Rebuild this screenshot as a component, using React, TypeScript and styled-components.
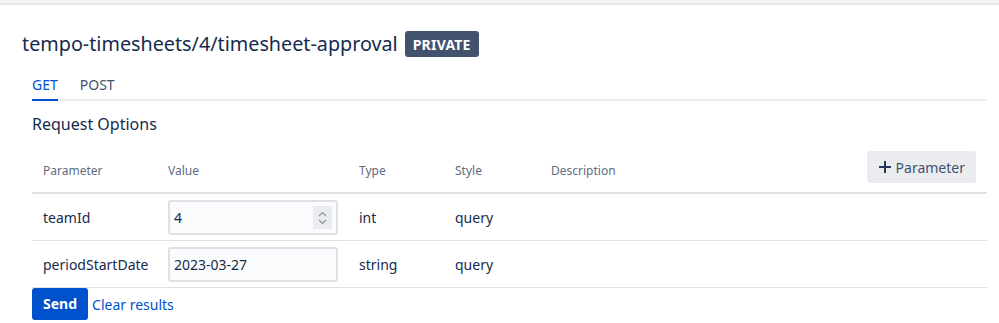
import React from "react";
import styled, { createGlobalStyle } from "styled-components";

const Global = createGlobalStyle`
  html, body { margin: 0; padding: 0; background: #fff; }
  body { font-family: "Segoe UI", "Noto Sans", sans-serif; color: #172b4d; }
  * { box-sizing: border-box; }
`;

const TopBand = styled.div`
  height: 5px;
  background: #f4f5f7;
  border-bottom: 2px solid #e4e5ea;
`;

const Page = styled.div`
  padding: 0 12px 0 22px;
`;

const TitleRow = styled.div`
  display: flex;
  align-items: center;
  gap: 7px;
  margin-top: 26px;
  height: 26px;
`;

const Title = styled.h1`
  margin: 0;
  font-size: 19.75px;
  font-weight: 400;
  line-height: 26px;
  color: #172b4d;
`;

const Badge = styled.span`
  display: inline-flex;
  align-items: center;
  height: 26px;
  padding: 0 8px;
  background: #42526e;
  color: #fff;
  font-weight: 700;
  font-size: 14px;
  border-radius: 3px;
  letter-spacing: 0.2px;
`;

const Section = styled.div`
  margin-left: 10px;
`;

const Tabs = styled.div`
  display: flex;
  gap: 22px;
  margin-top: 18px;
  border-bottom: 2px solid #ebecf0;
`;

const Tab = styled.div<{ $active?: boolean }>`
  font-size: 14px;
  line-height: 20px;
  padding-bottom: 4px;
  margin-bottom: -2px;
  color: ${(p) => (p.$active ? "#0052cc" : "#42526e")};
  border-bottom: 2px solid ${(p) => (p.$active ? "#0052cc" : "transparent")};
`;

const SubTitle = styled.h2`
  margin: 12px 0 0;
  font-size: 16px;
  font-weight: 400;
  line-height: 22px;
  color: #172b4d;
`;

const Table = styled.table`
  width: 100%;
  border-collapse: collapse;
  margin-top: 15px;
  table-layout: fixed;
`;

const Th = styled.th<{ $w?: number; $right?: boolean }>`
  width: ${(p) => (p.$w ? `${p.$w}px` : "auto")};
  text-align: ${(p) => (p.$right ? "right" : "left")};
  font-size: 12px;
  font-weight: 400;
  color: #5e6c84;
  padding: ${(p) => (p.$right ? "1px 11px 0" : "4px 11px 6px")};
  height: 43px;
  vertical-align: ${(p) => (p.$right ? "top" : "middle")};
  border-bottom: 2px solid #dfe1e6;
`;

const Td = styled.td`
  font-size: 14px;
  color: #172b4d;
  padding: 5px 11px 3px;
  height: 47px;
  border-bottom: 1px solid #dfe1e6;
  vertical-align: middle;
`;

const InputBox = styled.div`
  display: flex;
  align-items: center;
  width: 170px;
  height: 35px;
  background: #fafbfc;
  border: 2px solid #dfe1e6;
  border-radius: 3px;
  padding: 0 4px 0 4px;
  font-size: 14px;
  color: #172b4d;
`;

const InputText = styled.span`
  flex: 1;
`;

const Spinner = styled.div`
  width: 19px;
  height: 23px;
  background: #ebecf0;
  display: flex;
  align-items: center;
  justify-content: center;
`;

const AddButton = styled.button`
  display: inline-flex;
  align-items: center;
  gap: 4px;
  height: 32px;
  padding: 0 11px;
  border: none;
  border-radius: 3px;
  background: #ebecf0;
  color: #42526e;
  font-family: inherit;
  font-size: 14px;
`;

const Actions = styled.div`
  display: flex;
  align-items: center;
  gap: 4px;
`;

const SendButton = styled.button`
  height: 32px;
  padding: 0 11px;
  border: none;
  border-radius: 3px;
  background: #0052cc;
  color: #fff;
  font-family: inherit;
  font-weight: 700;
  font-size: 14px;
`;

const LinkText = styled.a`
  color: #0052cc;
  font-size: 14px;
  text-decoration: none;
  margin-top: 1px;
`;

const rows = [
  { name: "teamId", value: "4", type: "int", style: "query", spin: true },
  { name: "periodStartDate", value: "2023-03-27", type: "string", style: "query", spin: false },
];

export default function App() {
  return (
    <>
      <Global />
      <TopBand />
      <Page>
        <TitleRow>
          <Title>tempo-timesheets/4/timesheet-approval</Title>
          <Badge>PRIVATE</Badge>
        </TitleRow>
        <Section>
          <Tabs>
            <Tab $active>GET</Tab>
            <Tab>POST</Tab>
          </Tabs>
          <SubTitle>Request Options</SubTitle>
          <Table>
            <thead>
              <tr>
                <Th $w={125}>Parameter</Th>
                <Th $w={191}>Value</Th>
                <Th $w={96}>Type</Th>
                <Th $w={96}>Style</Th>
                <Th>Description</Th>
                <Th $w={140} $right>
                  <AddButton>
                    <svg width="14" height="14" viewBox="0 0 14 14">
                      <path d="M7 1v12M1 7h12" stroke="#253858" strokeWidth="2" />
                    </svg>
                    Parameter
                  </AddButton>
                </Th>
              </tr>
            </thead>
            <tbody>
              {rows.map((r) => (
                <tr key={r.name}>
                  <Td>{r.name}</Td>
                  <Td>
                    <InputBox>
                      <InputText>{r.value}</InputText>
                      {r.spin && (
                        <Spinner>
                          <svg width="11" height="16" viewBox="0 0 11 16">
                            <path d="M2 6l3.5-3.5L9 6M2 10l3.5 3.5L9 10" fill="none" stroke="#8993a4" strokeWidth="1.2" />
                          </svg>
                        </Spinner>
                      )}
                    </InputBox>
                  </Td>
                  <Td>{r.type}</Td>
                  <Td>{r.style}</Td>
                  <Td />
                  <Td />
                </tr>
              ))}
            </tbody>
          </Table>
          <Actions>
            <SendButton>Send</SendButton>
            <LinkText href="#">Clear results</LinkText>
          </Actions>
        </Section>
      </Page>
    </>
  );
}
